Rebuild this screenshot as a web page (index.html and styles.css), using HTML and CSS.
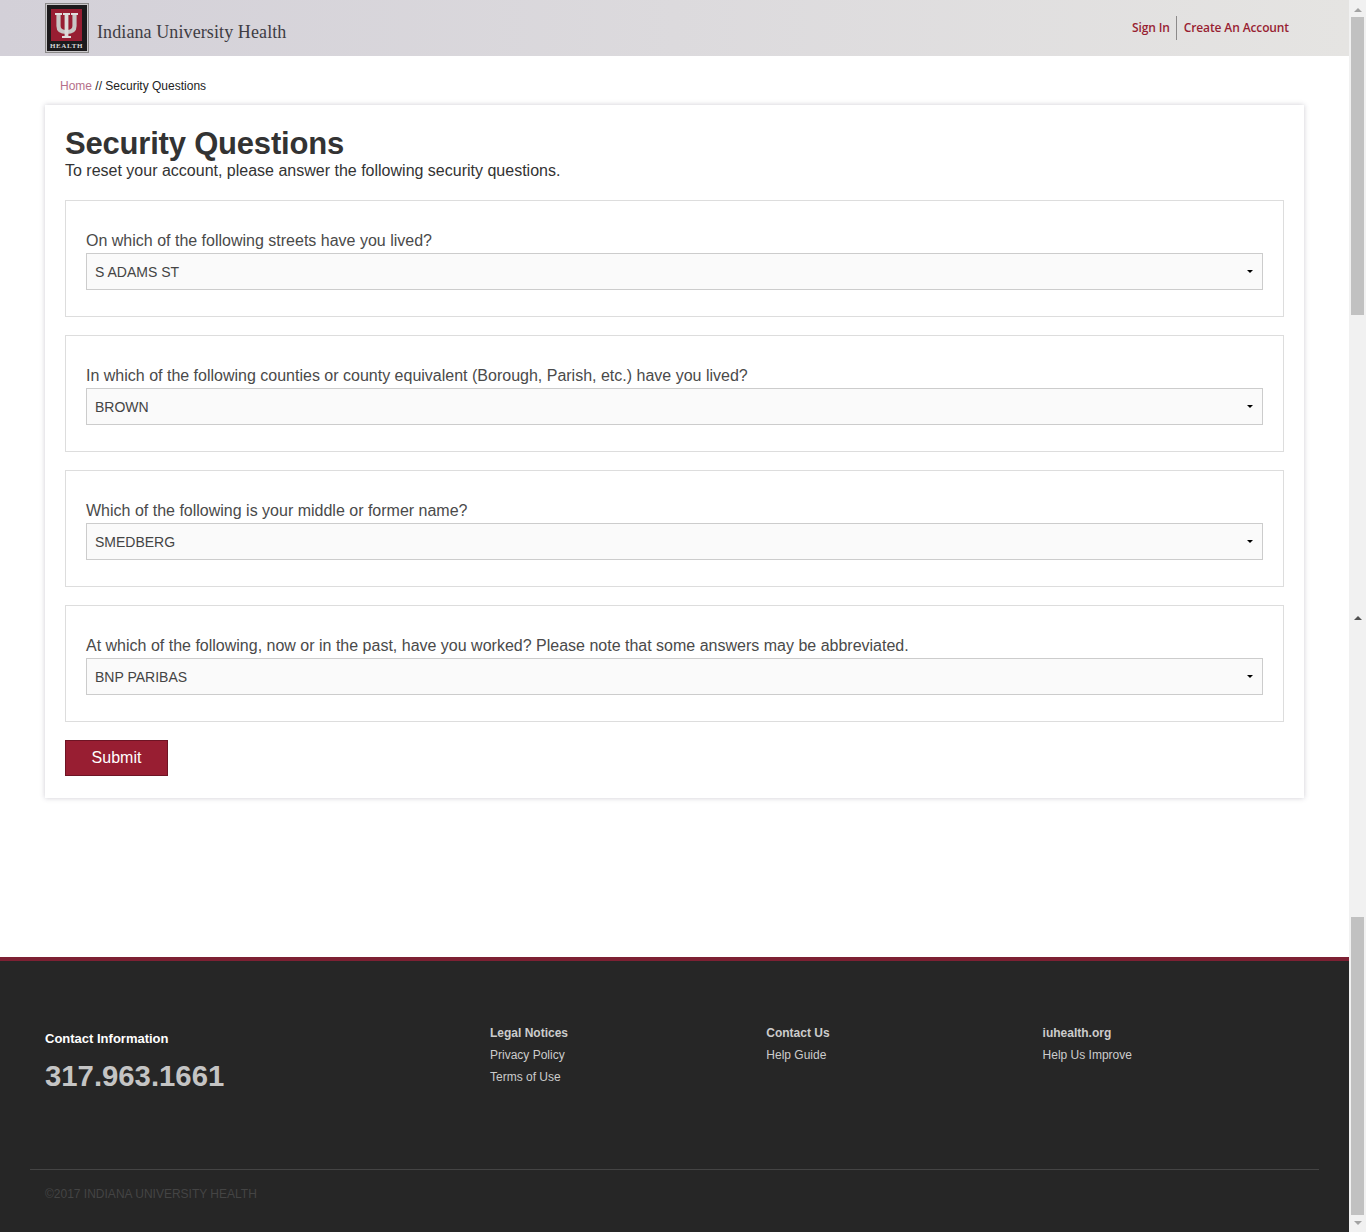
FILE: index.html
```html
<!DOCTYPE html>
<html lang="en">
<head>
    <meta charset="UTF-8">
    <meta name="viewport" content="width=device-width, initial-scale=1.0">
    <title>Security Questions</title>
    <link rel="stylesheet" href="styles.css">
</head>
<body>
    <div class="page">
        <div class="content">
            <header class="topbar">
                <a class="brand" href="#">
                    <svg class="logo" width="44" height="50" viewBox="0 0 44 50">
                        <rect x="0.5" y="0.5" width="43" height="49" fill="#1c1a1c" stroke="#8a8888"/>
                        <rect x="1.5" y="1.5" width="41" height="47" fill="none" stroke="#c9c7c9"/>
                        <rect x="6" y="6" width="31" height="32" fill="#981e32"/>
                        <g class="trident">
                            <path d="M13.5 11v12c0 4 3 6 8 6s8-2 8-6V11" fill="none" stroke="#c8c6c4" stroke-width="4.200"/>
                            <path d="M21.500 10v25" fill="none" stroke="#dcdad8" stroke-width="3.800"/>
                            <path d="M10 10h7v2h-7zM18 10h7v2h-7zM26 10h7v2h-7zM17 33h9v2h-9z" fill="#e0dedc"/>
                        </g>
                        <text class="logo-text" x="21.500" y="45" text-anchor="middle">HEALTH</text>
                    </svg>
                    <span class="brand-name">Indiana University Health</span>
                </a>
                <nav class="account-links">
                    <a href="#">Sign In</a>
                    <a href="#">Create An Account</a>
                </nav>
            </header>

            <main class="main">
                <p class="breadcrumb"><a href="#">Home</a> // Security Questions</p>

                <form class="card">
                    <h1>Security Questions</h1>
                    <p class="intro">To reset your account, please answer the following security questions.</p>

                    <div class="question">
                        <label>On which of the following streets have you lived?</label>
                        <button type="button" class="select-btn"><span>S ADAMS ST</span><span class="caret"></span></button>
                    </div>

                    <div class="question">
                        <label>In which of the following counties or county equivalent (Borough, Parish, etc.) have you lived?</label>
                        <button type="button" class="select-btn"><span>BROWN</span><span class="caret"></span></button>
                    </div>

                    <div class="question">
                        <label>Which of the following is your middle or former name?</label>
                        <button type="button" class="select-btn"><span>SMEDBERG</span><span class="caret"></span></button>
                    </div>

                    <div class="question">
                        <label>At which of the following, now or in the past, have you worked? Please note that some answers may be abbreviated.</label>
                        <button type="button" class="select-btn"><span>BNP PARIBAS</span><span class="caret"></span></button>
                    </div>

                    <button type="button" class="submit-btn">Submit</button>
                </form>
            </main>

            <footer class="footer">
                <div class="footer-cols">
                    <div class="contact">
                        <h4>Contact Information</h4>
                        <p class="phone">317.963.1661</p>
                    </div>
                    <ul class="footer-col col-legal">
                        <li class="footer-head"><a href="#">Legal Notices</a></li>
                        <li><a href="#">Privacy Policy</a></li>
                        <li><a href="#">Terms of Use</a></li>
                    </ul>
                    <ul class="footer-col">
                        <li class="footer-head"><a href="#">Contact Us</a></li>
                        <li><a href="#">Help Guide</a></li>
                    </ul>
                    <ul class="footer-col">
                        <li class="footer-head"><a href="#">iuhealth.org</a></li>
                        <li><a href="#">Help Us Improve</a></li>
                    </ul>
                </div>
                <hr>
                <p class="copyright">©2017 INDIANA UNIVERSITY HEALTH</p>
            </footer>
        </div>

        <!-- two scrollbars stacked, the screenshot was stitched from two scroll positions -->
        <div class="scrollbar">
            <span class="arrow-up arrow-light"></span>
            <div class="thumb thumb-first"></div>
            <span class="arrow-up arrow-dark"></span>
            <div class="thumb thumb-second"></div>
            <span class="arrow-down"></span>
        </div>
    </div>
</body>
</html>
```

FILE: styles.css
```css
* {
    box-sizing: border-box;
}

html, body {
    margin: 0;
    padding: 0;
    height: 1232px;
    overflow: hidden;
}

body {
    font-family: "Liberation Sans", Arial, sans-serif;
    color: #333;
    background-color: #fff;
}

a {
    text-decoration: none;
}

.page {
    display: flex;
    height: 1232px;
}

.content {
    flex: 1;
    min-width: 0;
    display: flex;
    flex-direction: column;
}

/* top bar */
.topbar {
    height: 56px;
    display: flex;
    justify-content: space-between;
    align-items: flex-start;
    padding: 3px 60px 0 45px;
    background: linear-gradient(to right, #d3d0d8, #e5e4e2);
}

.brand {
    display: flex;
    align-items: center;
    height: 50px;
}

.logo {
    display: block;
}

.logo-text {
    font-family: "Liberation Serif", serif;
    font-size: 7px;
    font-weight: bold;
    letter-spacing: 0.6px;
    fill: #d8d6d6;
}

.brand-name {
    margin-left: 8px;
    margin-top: 8px;
    font-family: "Liberation Serif", serif;
    font-size: 18px;
    letter-spacing: 0.1px;
    color: #3f3d44;
}

.account-links {
    display: flex;
    align-items: center;
    margin-top: 13px;
    font-family: "Open Sans", sans-serif;
    font-size: 12px;
    font-weight: 600;
    letter-spacing: -0.12px;
}

.account-links a {
    color: #981e32;
    line-height: 24px;
}

.account-links a + a {
    margin-left: 6px;
    padding-left: 7px;
    border-left: 1px solid #8c8a8a;
}

/* main */
.main {
    flex: 1;
    padding: 0 45px;
}

.breadcrumb {
    margin: 0;
    padding: 23px 15px 0;
    height: 49px;
    font-size: 12px;
    line-height: 14px;
    color: #222;
}

.breadcrumb a {
    color: #b5708a;
}

.card {
    width: 1259px;
    height: 693px;
    padding: 20px;
    background-color: #fff;
    box-shadow: 0 0 5px rgba(60, 50, 80, 0.25);
}

h1 {
    margin: 0;
    padding-top: 1px;
    font-size: 31px;
    line-height: 35px;
    font-weight: bold;
    letter-spacing: -0.2px;
    color: #333;
}

.intro {
    margin: 0 0 20px;
    font-size: 16px;
    line-height: 19px;
    color: #333;
}

.question {
    height: 117px;
    margin-bottom: 18px;
    padding: 30px 20px 0;
    border: 1px solid #ddd;
}

.question label {
    display: block;
    font-size: 16px;
    line-height: 19px;
    margin-bottom: 3px;
    color: #4a4a4a;
}

.select-btn {
    display: flex;
    justify-content: space-between;
    align-items: center;
    width: 100%;
    height: 37px;
    padding: 0 9px 0 8px;
    font-family: inherit;
    font-size: 14px;
    color: #444;
    text-align: left;
    background-color: #fafafa;
    border: 1px solid #ccc;
}

.caret {
    width: 0;
    height: 0;
    border-top: 3px solid #000;
    border-left: 3px solid transparent;
    border-right: 3px solid transparent;
}

.submit-btn {
    display: block;
    width: 103px;
    height: 36px;
    padding: 0;
    font-family: inherit;
    font-size: 16px;
    color: #fff;
    background-color: #981e32;
    border: 1px solid #6e1424;
}

/* footer */
.footer {
    height: 275px;
    padding-top: 0;
    background-color: #262626;
    border-top: 4px solid #7d2033;
}

.footer-cols {
    display: flex;
    height: 208px;
    padding: 61px 0 0 45px;
}

.contact {
    width: 445px;
    padding-top: 10px;
}

.contact h4 {
    margin: 0;
    font-size: 13px;
    line-height: 14px;
    color: #fff;
}

.phone {
    margin: 14px 0 0;
    font-size: 29.300px;
    line-height: 32px;
    font-weight: bold;
    color: #c4c4c4;
}

.footer-col {
    width: 276.300px;
    margin: 0;
    padding: 0;
    list-style: none;
    font-size: 12px;
    line-height: 22px;
}

.footer-col a {
    color: #ccc;
}

.footer-head {
    font-weight: bold;
}

.footer hr {
    margin: 0 30px;
    border: none;
    border-top: 1px solid #444;
}

.copyright {
    margin: 17px 0 0 45px;
    font-size: 12px;
    line-height: 14px;
    color: #444;
}

/* scrollbar */
.scrollbar {
    width: 17px;
    height: 1232px;
    display: flex;
    flex-direction: column;
    align-items: center;
    background-color: #f1f1f1;
}

.thumb {
    width: 13px;
    height: 298px;
    background-color: #c1c1c1;
}

.thumb-first {
    margin-top: 5px;
}

.thumb-second {
    margin-top: 297px;
}

.arrow-up, .arrow-down {
    width: 0;
    height: 0;
    border-left: 4px solid transparent;
    border-right: 4px solid transparent;
}

.arrow-up {
    border-bottom: 4px solid #a3a3a3;
}

.arrow-light {
    margin-top: 8px;
}

.arrow-dark {
    margin-top: 301px;
    border-bottom-color: #505050;
}

.arrow-down {
    margin-top: 6px;
    border-top: 4px solid #a3a3a3;
}
```
